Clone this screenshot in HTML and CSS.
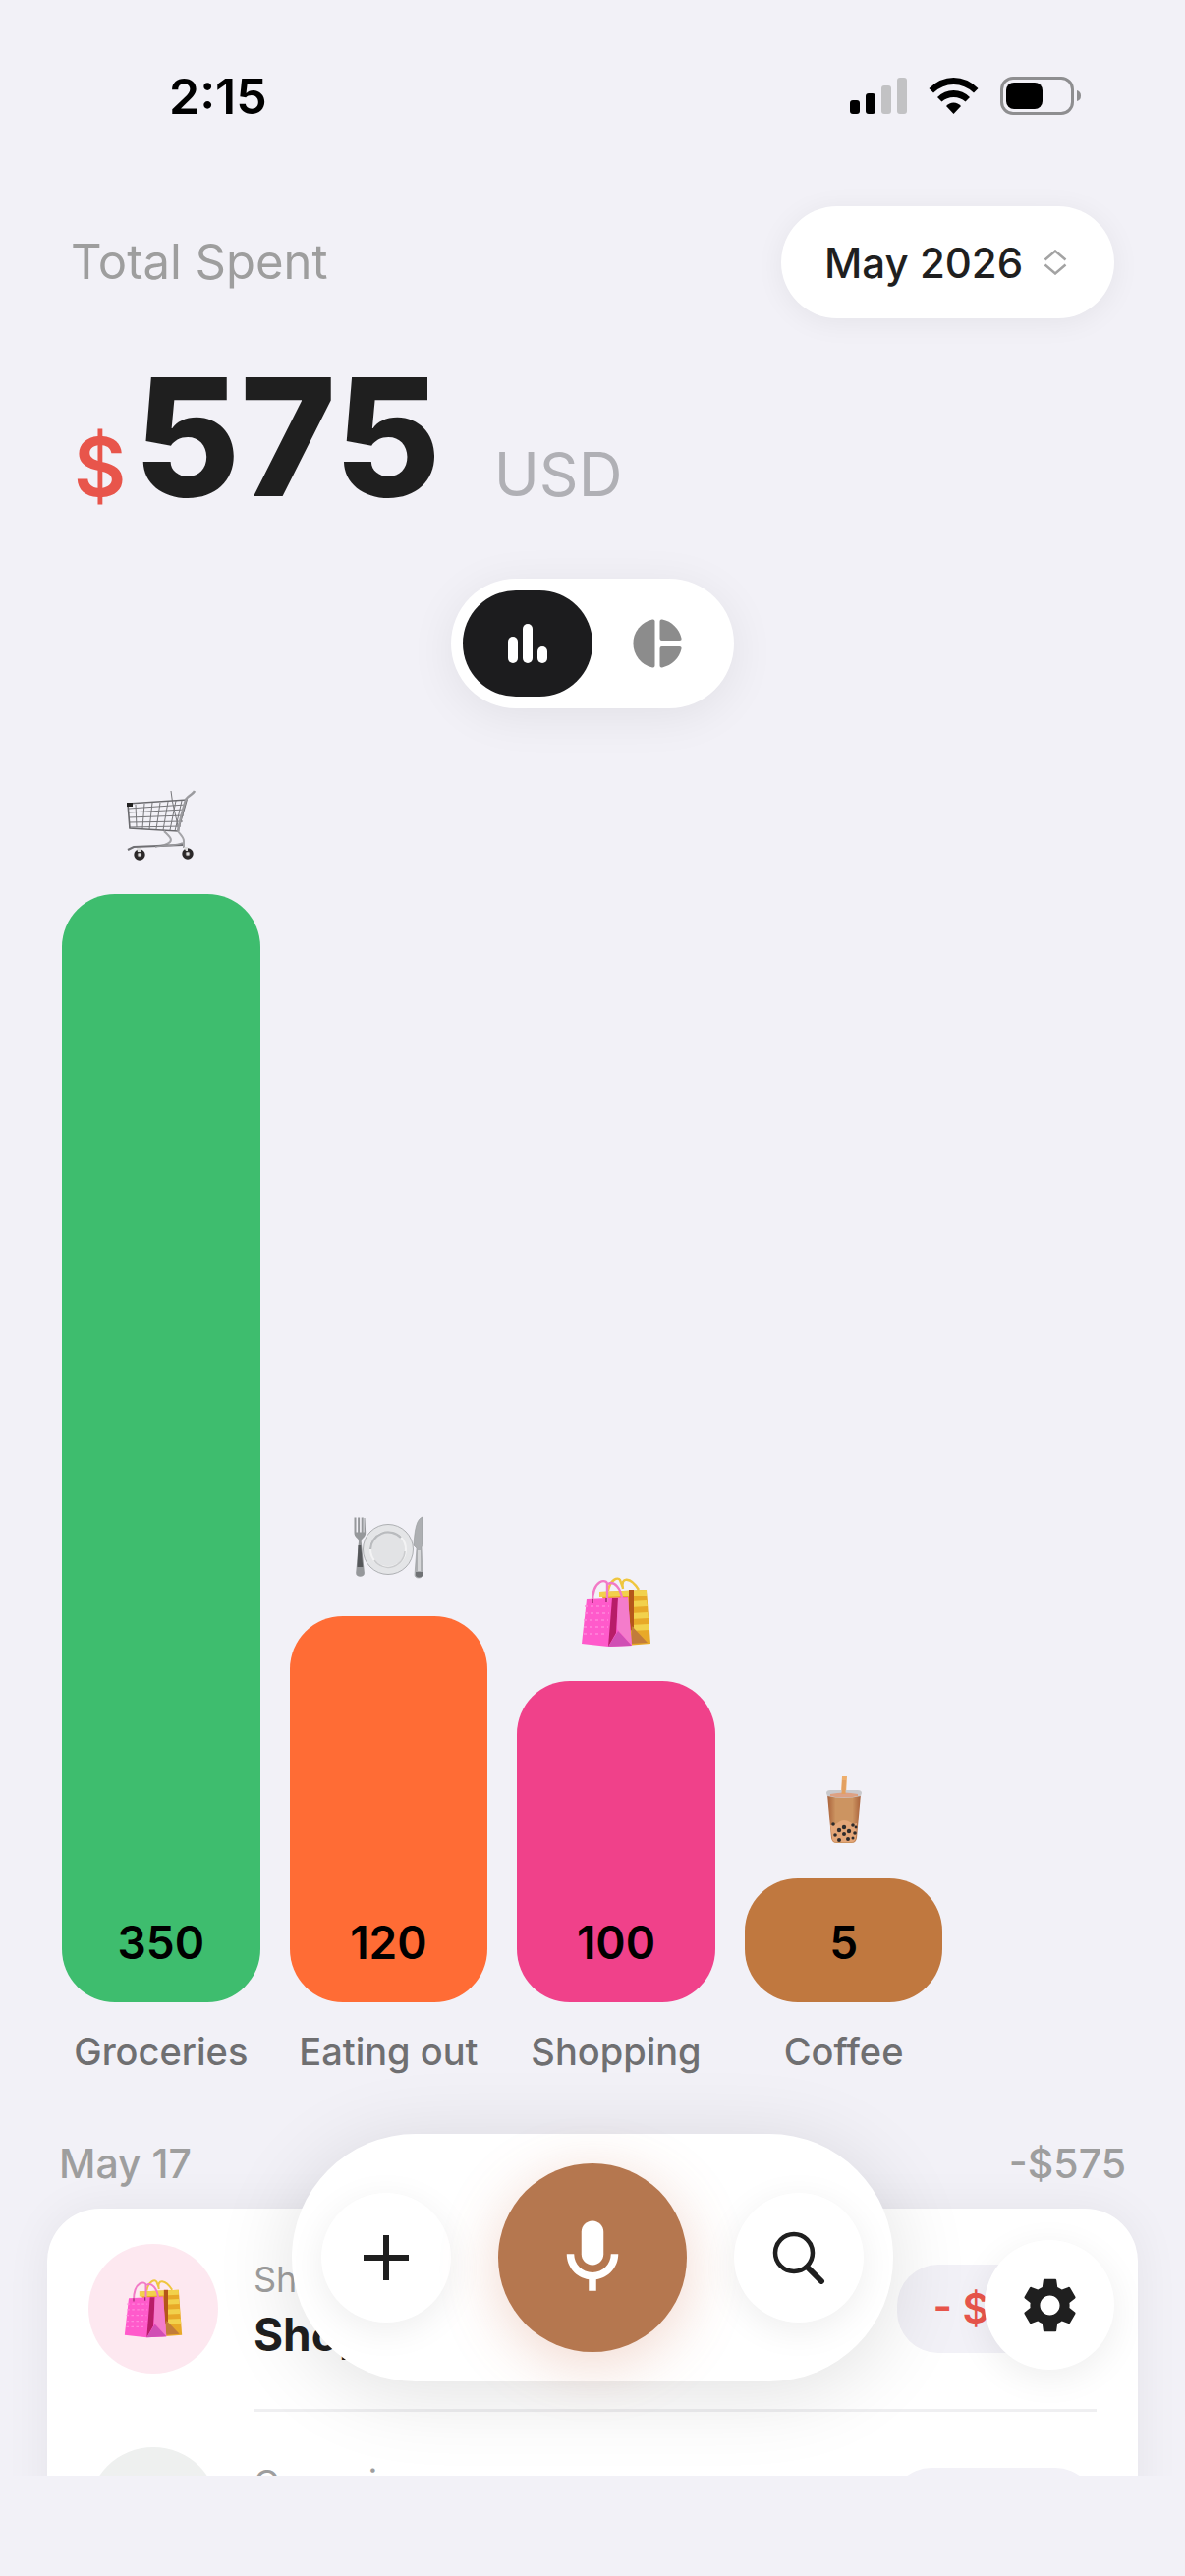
FILE: index.html
```html
<!DOCTYPE html>
<html lang="en">
<head>
<meta charset="utf-8">
<meta name="viewport" content="width=device-width, initial-scale=1">
<title>Total Spent</title>
<link rel="stylesheet" href="styles.css">
</head>
<body>
<svg class="sprite" aria-hidden="true">
  <symbol id="cart" viewBox="0 0 72 72">
    <g fill="none" stroke="#77777b" stroke-width="1">
      <path d="M3 19 61 15M3 23 60 20M3 28 59 26M3 33 58 32M3 38 56 37"/>
      <path d="M10 15 11 38M19 14 17 39M27 13 24 40M35 13 31 40M43 12 38 41M51 11 45 41M57 11 50 42"/>
      <path d="M46 1c1 14 6 28 8 41"/>
    </g>
    <path d="M2 14 62 10 53 42 4 39Z" fill="none" stroke="#6a6a6e" stroke-width="1.6"/>
    <path d="M53 42c2-11 5-22 8-32 1-3 8-6 9-9" fill="none" stroke="#9b9b9f" stroke-width="2.4"/>
    <path d="M39 42c4 4 9 8 6 11-3 3-9 4-14 4M53 42c3 4 6 6 6 10v7" fill="none" stroke="#a4a4a8" stroke-width="2"/>
    <path d="M2 61 8 58 58 56" fill="none" stroke="#6f6f73" stroke-width="2.2"/>
    <path d="M30 58c10-2 22-1 28-4" fill="none" stroke="#98989c" stroke-width="1.5"/>
    <path d="M1 13h6v4H1z" fill="#222"/>
    <g fill="#8c8686" stroke="#2b2829" stroke-width="3.4"><circle cx="14" cy="66" r="4"/><circle cx="63" cy="65" r="4"/></g>
    <g fill="#ddd"><circle cx="14" cy="66" r="1.4"/><circle cx="63" cy="65" r="1.4"/><path d="M11 59h4v4h-3zM59 58h4v4h-2z"/></g>
  </symbol>
  <symbol id="dining" viewBox="0 0 72 72">
    <circle cx="36" cy="38" r="25.500" fill="#e4e5e7" stroke="#aeb0b3" stroke-width="1"/>
    <circle cx="36" cy="38" r="18" fill="#e2e3e5" stroke="#f3f3f4" stroke-width="2"/>
    <path d="M18 38a18 18 0 0 1 31-12" fill="none" stroke="#b9bbbe" stroke-width="2.200"/>
    <path d="M53 40a17 17 0 0 1-31 9" fill="none" stroke="#cbccce" stroke-width="1.500"/>
    <path d="M1.500 5.500h2v15h1.600v-15h2v15h1.600v-15h2v15h.800V6h1l.7 15c0 5-4 5-4.500 9l3.200 32c.3 5-9 5-8.700 0L6 30c0-4-4.500-4-4.500-9z" fill="#96989b"/>
    <path d="M5.500 34h2.800l2 22H4.500z" fill="#55575a"/>
    <path d="M71 5c-6 2-8 12-9 29l3 3-2 27c0 4 8 4 8 0l-1-28 1-3z" fill="#adafb2" stroke="#96989b" stroke-width=".600"/>
    <path d="M66 39h3v21h-3z" fill="#d5d6d8"/>
    <path d="M64 61h7v4q-3.500 3-7 0z" fill="#707275"/>
  </symbol>
  <symbol id="bags" viewBox="0 0 72 72">
    <path d="M28 14c2-12 10-14 12-11l3 8M43 12c-3-13 8-12 16 1" fill="none" stroke="#efc63e" stroke-width="2.400"/>
    <path d="M19 15 67 13 71 68 46 70z" fill="#e8a928"/>
    <path d="M19 15 67 13v6l-48 2zM50 25l17-1 1 6-18 1zM50 37l18-1 1 6-19 1zM50 49l19-1 1 6-20 1z" fill="#f2d14c"/>
    <path d="m49 13 5 0 0 38-5 7z" fill="#b5561a"/>
    <path d="m52 50 16 17-17 1z" fill="#c27c3a"/>
    <path d="M6 23 48 21 52 70 28 71 1 68z" fill="#ff5acb"/>
    <path d="m32 22 6 0-2 35-8 14z" fill="#b81d68"/>
    <path d="M38 22h10l4 48-15-17z" fill="#f47ccb"/>
    <path d="m38 55 14 15-24 1z" fill="#d04fb4"/>
    <path d="M4 30h25M4 37h25M3 44h25M3 51h25M3 58h23" stroke="#ff86dc" stroke-width="1.500" stroke-dasharray="3 3"/>
    <path d="M12 26c0-25 15-24 15-19v19M28 7c6-4 13 5 14 15" fill="none" stroke="#f27ac6" stroke-width="2.400"/>
    <path d="M12 23v4M26 22v4" stroke="#a92677" stroke-width="1.600"/>
  </symbol>
  <symbol id="boba" viewBox="0 0 72 72">
    <defs>
      <linearGradient id="tea" x1="0" x2="1">
        <stop offset="0" stop-color="#a9613a"/><stop offset=".25" stop-color="#cc9461"/><stop offset=".75" stop-color="#cc9461"/><stop offset="1" stop-color="#a9613a"/>
      </linearGradient>
    </defs>
    <path d="M34 2h5l-1 18h-5z" fill="#eeae6c"/>
    <path d="M19 20 53 20 49 65q-1 5-5 5H28q-4 0-5-5z" fill="url(#tea)"/>
    <path d="M22 52c7 0 9-5 14-5s8 5 13 3l-1 15q-1 4-4 4H28q-4 0-4-4z" fill="#e4a678"/>
    <path d="M18 19q0-3 4-3h28q4 0 4 3l-1 3q-17 4-34 0z" fill="#c9c9cc"/>
    <path d="M22 20q14-3 28 0v2q-14 3-28 0z" fill="#dda183"/>
    <path d="M34 6h4l-.500 14h-4z" fill="#e3a060"/>
    <g fill="#2d2b2c"><circle cx="25" cy="51" r="1.800"/><circle cx="31" cy="57" r="2.200"/><circle cx="36" cy="54" r="2.200"/><circle cx="27" cy="62" r="1.800"/><circle cx="36" cy="61" r="2"/><circle cx="41" cy="58" r="2.200"/><circle cx="45" cy="52" r="1.800"/><circle cx="47" cy="60" r="1.800"/><circle cx="31" cy="67" r="2"/><circle cx="40" cy="66" r="2"/><circle cx="45" cy="65" r="1.500"/><circle cx="48" cy="54" r="1.400"/></g>
  </symbol>
</svg>

<div class="app">
  <div class="status">
    <time class="clock">2:15</time>
    <svg class="status-icons" viewBox="0 0 236 40" aria-hidden="true">
      <rect x="0" y="24" width="10" height="14" rx="3"/>
      <rect x="16" y="17" width="10" height="21" rx="3"/>
      <rect x="32" y="9" width="10" height="29" rx="3" fill="#c2c2c4"/>
      <rect x="48" y="1" width="10" height="37" rx="3" fill="#c2c2c4"/>
      <path d="M80.500 12q11-11 25-11t25 11l-4.500 4.500q-9-8.500-20.500-8.500t-20.500 8.500z"/>
      <path d="M89 21q7-7 16.500-7t16.500 7l-4.500 4.500q-5-4.500-12-4.500t-12 4.500z"/>
      <path d="M98 30q3-3.500 7.500-3.500t7.500 3.500l-7.500 8z"/>
      <rect x="154.500" y="1.500" width="72" height="36" rx="11.500" fill="none" stroke="#8e8e90" stroke-width="3"/>
      <rect x="159" y="6" width="37" height="27" rx="8"/>
      <path d="M231 14q4 1 4 5.500t-4 5.500z" fill="#8e8e90"/>
    </svg>
  </div>

  <main class="content">
    <header class="head">
      <h1 class="head-title">Total Spent</h1>
      <div class="month">
        <select class="month-select" aria-label="Month"><option>May 2026</option></select>
        <svg class="month-arrows" viewBox="0 0 24 26" aria-hidden="true"><path d="m1.500 10.500 10.500-9 10.500 9M1.500 15.500l10.500 9 10.500-9" fill="none" stroke="#a3a3a3" stroke-width="2.500"/></svg>
      </div>
    </header>

    <p class="total"><span class="total-sign">$</span><span class="total-value">575</span><span class="total-unit">USD</span></p>

    <div class="toggle" role="group" aria-label="Chart type">
      <button class="toggle-button toggle-active" type="button" aria-label="Bar chart" aria-pressed="true">
        <svg width="40" height="40" viewBox="0 0 40 40" fill="#fff"><rect x="0" y="13" width="10" height="27" rx="5"/><rect x="15" y="0" width="10" height="40" rx="5"/><rect x="30" y="23" width="10" height="17" rx="5"/></svg>
      </button>
      <button class="toggle-button" type="button" aria-label="Pie chart" aria-pressed="false">
        <svg width="50" height="50" viewBox="0 0 50 50" fill="#8c8c8c"><path d="M20 .600q2.500-.500 2.500 2v44.800q0 2.500-2.500 2A25 25 0 0 1 20 .600z"/><path d="M30 .600q-2.500-.500-2.500 2V20q0 2 2 2h18q2.500 0 2-2.500A25 25 0 0 0 30 .600z"/><path d="M30 49.400q-2.500.500-2.500-2V30q0-2 2-2h18q2.500 0 2 2.500A25 25 0 0 1 30 49.400z"/></svg>
      </button>
    </div>

    <ul class="chart">
      <li class="column">
        <svg class="emoji" aria-hidden="true"><use href="#cart"/></svg>
        <div class="bar bar-groceries" style="height:1128px">350</div>
        <span class="column-label">Groceries</span>
      </li>
      <li class="column">
        <svg class="emoji" aria-hidden="true"><use href="#dining"/></svg>
        <div class="bar bar-eating" style="height:393px">120</div>
        <span class="column-label">Eating out</span>
      </li>
      <li class="column">
        <svg class="emoji" aria-hidden="true"><use href="#bags"/></svg>
        <div class="bar bar-shopping" style="height:327px">100</div>
        <span class="column-label">Shopping</span>
      </li>
      <li class="column">
        <svg class="emoji" aria-hidden="true"><use href="#boba"/></svg>
        <div class="bar bar-coffee" style="height:126px">5</div>
        <span class="column-label">Coffee</span>
      </li>
    </ul>

    <section class="day">
      <h2 class="day-head"><span>May 17</span><span>-$575</span></h2>
      <ul class="entries">
        <li class="entry">
          <span class="entry-icon entry-icon-pink"><svg class="emoji-small" aria-hidden="true"><use href="#bags"/></svg></span>
          <div class="entry-body">
            <div class="entry-text"><span class="entry-category">Shopping</span><span class="entry-name">Shopping</span></div>
            <span class="entry-amount">- $100</span>
          </div>
        </li>
        <li class="entry">
          <span class="entry-icon"><svg class="emoji-small" aria-hidden="true"><use href="#cart"/></svg></span>
          <div class="entry-body">
            <div class="entry-text"><span class="entry-category">Groceries</span><span class="entry-name">Groceries</span></div>
            <span class="entry-amount">- $350</span>
          </div>
        </li>
      </ul>
    </section>
  </main>

  <nav class="dock" aria-label="Actions">
    <button class="round" type="button" aria-label="Add expense">
      <svg width="46" height="46" viewBox="0 0 46 46"><path d="M23 0v46M0 23h46" stroke="#1f1f1f" stroke-width="6"/></svg>
    </button>
    <button class="round mic" type="button" aria-label="Record expense">
      <svg width="90" height="90" viewBox="0 0 24 24" fill="#fff"><path d="M12 14c1.660 0 3-1.340 3-3V5c0-1.660-1.340-3-3-3S9 3.340 9 5v6c0 1.660 1.340 3 3 3z"/><path d="M17 11c0 2.760-2.240 5-5 5s-5-2.240-5-5H5c0 3.530 2.610 6.430 6 6.920V21h2v-3.080c3.390-.490 6-3.390 6-6.920h-2z"/></svg>
    </button>
    <button class="round" type="button" aria-label="Search">
      <svg width="54" height="54" viewBox="0 0 54 54" fill="none" stroke="#1f1f1f"><circle cx="22" cy="22" r="19" stroke-width="4.500"/><path d="m36 37 14 14" stroke-width="6" stroke-linecap="round"/></svg>
    </button>
  </nav>
  <button class="round settings" type="button" aria-label="Settings">
    <svg width="67" height="67" viewBox="0 0 24 24" fill="#1f1f1f"><path d="M19.140 12.940c.040-.300.060-.610.060-.940 0-.320-.020-.640-.070-.940l2.030-1.580c.180-.140.230-.410.120-.610l-1.920-3.320c-.120-.220-.370-.290-.590-.220l-2.390.960c-.500-.380-1.030-.700-1.620-.940l-.360-2.540c-.040-.240-.240-.410-.480-.410h-3.840c-.240 0-.430.170-.470.410l-.360 2.540c-.590.240-1.130.570-1.620.940l-2.390-.960c-.220-.080-.470 0-.590.220L2.740 8.870c-.120.210-.080.470.120.610l2.030 1.580c-.050.300-.090.630-.090.940s.020.640.070.940l-2.030 1.580c-.180.140-.230.410-.120.610l1.920 3.320c.120.220.370.290.590.220l2.390-.960c.500.380 1.030.700 1.620.940l.360 2.540c.050.240.240.410.480.410h3.840c.240 0 .440-.170.470-.410l.360-2.540c.590-.240 1.130-.560 1.620-.940l2.390.960c.220.080.470 0 .590-.220l1.920-3.320c.120-.220.070-.470-.120-.610l-2.010-1.580zM12 15.600c-1.980 0-3.600-1.620-3.600-3.600s1.620-3.600 3.600-3.600 3.600 1.620 3.600 3.600-1.620 3.600-3.600 3.600z"/></svg>
  </button>
</div>
</body>
</html>
```
FILE: styles.css
```css
* {
  box-sizing: border-box;
}

body {
  margin: 0;
  background: #f2f1f7;
  color: #1f1f1f;
  font-family: Inter, "Liberation Sans", sans-serif;
}

h1, h2, p, ul {
  margin: 0;
  padding: 0;
  font-weight: 400;
  list-style: none;
}

button, select {
  margin: 0;
  padding: 0;
  border: 0;
  background: none;
  color: inherit;
  font: inherit;
}

.sprite {
  position: absolute;
  width: 0;
  height: 0;
}

.app {
  position: relative;
  display: flex;
  flex-direction: column;
  height: 100vh;
  padding-bottom: 102px;
  overflow: hidden;
}

/* Status bar */

.status {
  display: flex;
  flex: none;
  align-items: center;
  justify-content: space-between;
  padding: 60px 105px 0 172px;
}

.clock {
  color: #000;
  font-size: 50px;
  font-weight: 600;
  line-height: 76px;
}

.status-icons {
  width: 236px;
  height: 40px;
}

.content {
  flex: 1;
  min-height: 0;
  padding-top: 74px;
  overflow: hidden;
}

.head {
  display: flex;
  align-items: center;
  justify-content: space-between;
  padding: 0 72px;
}

.head-title {
  color: #9e9e9e;
  font-size: 49px;
  line-height: 60px;
}

.month {
  position: relative;
  border-radius: 57px;
  background: #fff;
  box-shadow: 0 4px 30px rgba(0, 0, 0, 0.06);
}

.month-select {
  display: block;
  height: 114px;
  padding: 0 92px 0 44px;
  border-radius: 57px;
  appearance: none;
  font-size: 42px;
  font-weight: 500;
}

.month-arrows {
  position: absolute;
  top: 44px;
  right: 48px;
  width: 24px;
  height: 26px;
  pointer-events: none;
}

.total {
  display: flex;
  align-items: baseline;
  margin-top: 40px;
  padding: 0 75px;
  line-height: 60px;
}

.total-sign {
  color: #e8554b;
  font-size: 82px;
  font-weight: 600;
}

.total-value {
  margin-left: 8px;
  font-size: 166px;
  font-weight: 800;
  line-height: 162px;
}

.total-unit {
  margin-left: 54px;
  color: #b0b0b5;
  font-size: 62px;
}

.toggle {
  display: flex;
  width: fit-content;
  margin: 63px auto 0;
  padding: 12px;
  border-radius: 66px;
  background: #fff;
  box-shadow: 0 8px 48px rgba(0, 0, 0, 0.07);
}

.toggle-button {
  display: grid;
  place-items: center;
  width: 132px;
  height: 108px;
  border-radius: 54px;
}

.toggle-active {
  background: #1c1c1e;
}

/* Bar chart */

.chart {
  display: grid;
  grid-template-columns: repeat(5, 1fr);
  margin-top: 83px;
  padding-left: 48px;
}

.column {
  display: flex;
  flex-direction: column;
  justify-content: flex-end;
  padding: 0 15px;
}

.emoji {
  align-self: center;
  width: 72px;
  height: 72px;
  margin-bottom: 34px;
}

.bar {
  display: flex;
  align-items: flex-end;
  justify-content: center;
  padding-bottom: 36px;
  border-radius: 54px;
  color: #000;
  font-size: 46px;
  font-weight: 600;
  line-height: 50px;
}

.bar-groceries {
  background: #3ebd6e;
}

.bar-eating {
  background: #ff6c35;
}

.bar-shopping {
  background: #f0418a;
}

.bar-coffee {
  background: #c0783f;
}

.column-label {
  margin-top: 28px;
  color: #6f6f71;
  font-size: 38px;
  font-weight: 500;
  line-height: 44px;
  text-align: center;
  white-space: nowrap;
}

/* Entries of one day */

.day {
  margin-top: 68px;
  padding: 0 48px;
}

.day-head {
  display: flex;
  justify-content: space-between;
  padding: 0 12px;
  color: #9e9e9e;
  font-size: 41px;
  font-weight: 500;
  line-height: 48px;
}

.entries {
  margin-top: 22px;
  padding: 0 42px;
  border-radius: 54px;
  background: #fff;
  box-shadow: 0 0 48px rgba(0, 0, 0, 0.06);
}

.entry {
  display: flex;
  gap: 36px;
}

.entry-icon {
  display: grid;
  flex: none;
  place-items: center;
  width: 132px;
  height: 132px;
  margin: 36px 0 39px;
  border-radius: 50%;
  background: #eef0ef;
}

.entry-icon-pink {
  background: #fde8f0;
}

.emoji-small {
  width: 60px;
  height: 60px;
}

.entry-body {
  display: flex;
  flex: 1;
  align-items: center;
  justify-content: space-between;
  border-bottom: 3px solid #efeff1;
}

.entry-text {
  display: flex;
  flex-direction: column;
  padding-bottom: 4px;
}

.entry-category {
  color: #9e9e9e;
  font-size: 36px;
  line-height: 56px;
}

.entry-name {
  font-size: 46px;
  font-weight: 700;
  line-height: 56px;
}

.entry-amount {
  padding: 0 36px;
  border-radius: 42px;
  background: #f2f1f7;
  color: #e8554b;
  font-size: 42px;
  font-weight: 600;
  line-height: 90px;
}

/* Floating controls */

.dock {
  position: absolute;
  bottom: 198px;
  left: 50%;
  display: flex;
  align-items: center;
  gap: 48px;
  padding: 30px;
  border-radius: 126px;
  background: #fff;
  box-shadow: 0 12px 84px rgba(0, 0, 0, 0.12);
  transform: translateX(-50%);
}

.round {
  display: grid;
  flex: none;
  place-items: center;
  width: 132px;
  height: 132px;
  border-radius: 50%;
  background: #fff;
  box-shadow: 0 8px 36px rgba(0, 0, 0, 0.07);
}

.mic {
  width: 192px;
  height: 192px;
  background: #b5774f;
  box-shadow: 0 12px 60px rgba(200, 100, 60, 0.26);
}

.settings {
  position: absolute;
  right: 72px;
  bottom: 210px;
}
```
